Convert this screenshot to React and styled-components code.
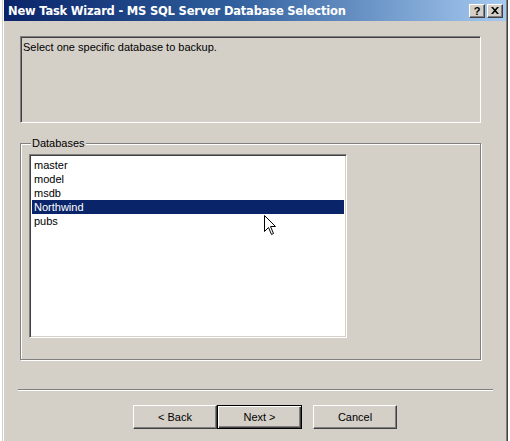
import React from 'react'
import styled, { createGlobalStyle } from 'styled-components'

const GlobalStyle = createGlobalStyle`
  html, body { margin: 0; padding: 0; background: #ffffff; }
  body { font-family: "Liberation Sans", Arial, sans-serif; }
`

const databases = ['master', 'model', 'msdb', 'Northwind', 'pubs']

function App() {
  return (
    <>
      <GlobalStyle />
      <Window>
        <TitleBar>
          <TitleText>New Task Wizard - MS SQL Server Database Selection</TitleText>
          <TitleButtons>
            <CaptionButton>?</CaptionButton>
            <CaptionButton>
              <svg width="8" height="7" viewBox="0 0 8 7">
                <path d="M0 0h2l2 2.2L6 0h2L5 3.5 8 7H6L4 4.8 2 7H0l3-3.5z" fill="#000" />
              </svg>
            </CaptionButton>
          </TitleButtons>
        </TitleBar>

        <Body>
          <InfoBox>Select one specific database to backup.</InfoBox>

          <GroupBox>
            <Legend>Databases</Legend>
            <ListBox>
              {databases.map((name) => (
                <ListItem key={name} selected={name === 'Northwind'}>{name}</ListItem>
              ))}
              <Pointer width="13" height="21" viewBox="0 0 13 21">
                <path
                  d="M0.5 0.5 L0.5 16.5 L4.5 12.5 L7.5 19.5 L9.5 18.5 L6.5 11.5 L11.5 11.5 Z"
                  fill="#fff"
                  stroke="#000"
                  strokeWidth="1"
                  strokeLinejoin="miter"
                />
              </Pointer>
            </ListBox>
          </GroupBox>

          <Separator />

          <ButtonRow>
            <Button>&lt; Back</Button>
            <Button isDefault>Next &gt;</Button>
            <Button spaced>Cancel</Button>
          </ButtonRow>
        </Body>
      </Window>
    </>
  )
}

export default App

const Window = styled.div`
  margin-left: 2px;
  width: 506px;
  height: 441px;
  box-sizing: border-box;
  background: #d4d0c8;
  border-left: 1px solid #d4d0c8;
  border-right: 1px solid #404040;
  box-shadow: inset 1px 0 #ffffff, inset -1px 0 #808080;
  padding: 0 2px;
  display: flex;
  flex-direction: column;
  overflow: hidden;
`

const TitleBar = styled.div`
  height: 21px;
  margin: 0 -1px;
  display: flex;
  align-items: center;
  justify-content: space-between;
  padding: 0 3px 0 4px;
  background: linear-gradient(to right, #0a246a 0%, #2f5e9c 45%, #a6caf0 100%);
`

const TitleText = styled.span`
  color: #ffffff;
  font-family: "DejaVu Sans", Verdana, sans-serif;
  font-weight: bold;
  font-size: 11.5px;
  letter-spacing: -0.2px;
  white-space: nowrap;
`

const TitleButtons = styled.div`
  display: flex;
  gap: 2px;
`

const CaptionButton = styled.div`
  width: 16px;
  height: 14px;
  box-sizing: border-box;
  background: #d4d0c8;
  border: 1px solid;
  border-color: #ffffff #404040 #404040 #ffffff;
  box-shadow: inset -1px -1px #808080;
  display: flex;
  align-items: center;
  justify-content: center;
  font-family: "Liberation Sans", Arial, sans-serif;
  font-weight: bold;
  font-size: 11px;
  color: #000;
`

const Body = styled.div`
  flex: 1;
  display: flex;
  flex-direction: column;
  padding-top: 15px;
  font-family: "Liberation Sans", Arial, sans-serif;
  font-size: 11px;
  color: #000;
`

const InfoBox = styled.div`
  margin: 0 24px 0 15px;
  height: 87px;
  box-sizing: border-box;
  border: 1px solid;
  border-color: #808080 #ffffff #ffffff #808080;
  box-shadow: inset 1px 1px #404040, inset -1px -1px #d4d0c8;
  padding: 4px 2px;
  line-height: 13px;
`

const GroupBox = styled.fieldset`
  margin: 14px 24px 0 15px;
  padding: 4px 9px 0 8px;
  height: 223px;
  box-sizing: border-box;
  border: 1px solid #808080;
  box-shadow: 1px 1px 0 #ffffff, inset 1px 1px 0 #ffffff;
  min-width: 0;
`

const Legend = styled.legend`
  padding: 0 1px;
  margin-left: 2px;
  line-height: 13px;
  background: #d4d0c8;
  color: #000;
`

const ListBox = styled.div`
  position: relative;
  width: 318px;
  height: 184px;
  box-sizing: border-box;
  background: #ffffff;
  border: 1px solid;
  border-color: #808080 #ffffff #ffffff #808080;
  box-shadow: inset 1px 1px #404040, inset -1px -1px #d4d0c8;
  padding: 3px 2px 2px 2px;
`

const ListItem = styled.div`
  height: 14px;
  line-height: 14px;
  padding-left: 2px;
  background: ${(p) => (p.selected ? '#0a246a' : 'transparent')};
  color: ${(p) => (p.selected ? '#ffffff' : '#000000')};
`

const Pointer = styled.svg`
  position: absolute;
  left: 234px;
  top: 60px;
`

const Separator = styled.div`
  margin: 29px 12px 0 13px;
  border-top: 1px solid #808080;
  border-bottom: 1px solid #ffffff;
`

const ButtonRow = styled.div`
  display: flex;
  padding-left: 128px;
  margin-top: 14px;
`

const Button = styled.div`
  width: ${(p) => (p.isDefault ? '85px' : '84px')};
  height: 24px;
  box-sizing: border-box;
  margin-left: ${(p) => (p.spaced ? '11px' : '0')};
  display: flex;
  align-items: center;
  justify-content: center;
  background: #d4d0c8;
  font-size: 11px;
  color: #000;
  border: 1px solid;
  border-color: ${(p) => (p.isDefault ? '#000000' : '#ffffff #404040 #404040 #ffffff')};
  box-shadow: ${(p) =>
    p.isDefault
      ? 'inset 1px 1px #ffffff, inset -1px -1px #404040, inset -2px -2px #808080'
      : 'inset -1px -1px #808080'};
`
